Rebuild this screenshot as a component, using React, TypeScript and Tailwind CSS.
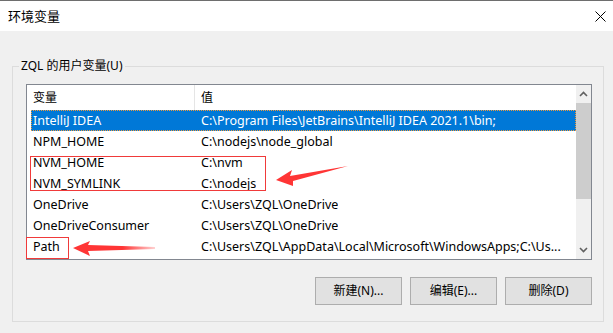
import React from "react";

const rows = [
  { name: "IntelliJ IDEA", value: "C:\\Program Files\\JetBrains\\IntelliJ IDEA 2021.1\\bin;" },
  { name: "NPM_HOME", value: "C:\\nodejs\\node_global" },
  { name: "NVM_HOME", value: "C:\\nvm" },
  { name: "NVM_SYMLINK", value: "C:\\nodejs" },
  { name: "OneDrive", value: "C:\\Users\\ZQL\\OneDrive" },
  { name: "OneDriveConsumer", value: "C:\\Users\\ZQL\\OneDrive" },
  { name: "Path", value: "C:\\Users\\ZQL\\AppData\\Local\\Microsoft\\WindowsApps;C:\\Us..." },
];

const font = { fontFamily: '"Noto Sans", "Noto Sans CJK SC", sans-serif' };

export default function App() {
  return (
    <div
      className="relative h-[333px] w-[613px] overflow-hidden bg-[#f0f0f0] text-[12px] text-black"
      style={font}
    >
      {/* Title bar */}
      <div className="flex h-[31px] items-center justify-between border-t border-[#6e6e6e] bg-white pl-[8px] pr-[7px]">
        <span className="text-[13px] leading-none">环境变量</span>
        <svg width="11" height="11" viewBox="0 0 11 11">
          <path d="M0.5 0.5 L10.5 10.5 M10.5 0.5 L0.5 10.5" stroke="#000" strokeWidth="1" />
        </svg>
      </div>

      {/* Group box */}
      <div className="relative ml-[12px] mt-[35px] h-[256px] w-[592px] border border-[#dcdcdc] pl-[13px] pt-[17px]">
        <span className="absolute left-[6px] top-[-9px] bg-[#f0f0f0] px-[2px] leading-[16px]">
          ZQL 的用户变量(U)
        </span>

        {/* List view */}
        <div className="flex h-[176px] w-[566px] border border-[#828790] bg-white text-[12.5px]">
          <div className="flex min-w-0 flex-1 flex-col">
            <div className="flex h-[25px] shrink-0 items-center text-[12px]">
              <div className="h-full w-[168px] border-r border-[#e5e5e5] pl-[6px] pt-[4px]">变量</div>
              <div className="pl-[6px]">值</div>
            </div>
            {rows.map((r, i) => (
              <div
                key={r.name}
                className={
                  i === 0
                    ? "ml-[4px] flex h-[21px] shrink-0 items-center border border-dotted border-[#f09a3c] bg-[#0078d7] pt-[1px] text-white"
                    : "ml-[4px] flex h-[21px] shrink-0 items-center border border-transparent pt-[1px]"
                }
              >
                <div className="w-[168px] shrink-0 pl-[1px]">{r.name}</div>
                <div className="min-w-0 overflow-hidden whitespace-nowrap pl-[1px]">{r.value}</div>
              </div>
            ))}
          </div>

          {/* Scrollbar */}
          <div className="flex w-[15px] shrink-0 flex-col bg-[#f0f0f0]">
            <div className="flex h-[18px] items-center justify-center">
              <svg width="9" height="6" viewBox="0 0 9 6">
                <path d="M1 5 L4.5 1.5 L8 5" fill="none" stroke="#606060" strokeWidth="1.6" />
              </svg>
            </div>
            <div className="h-[96px] bg-[#cdcdcd]" />
            <div className="flex-1" />
            <div className="flex h-[18px] items-center justify-center">
              <svg width="9" height="6" viewBox="0 0 9 6">
                <path d="M1 1 L4.5 4.5 L8 1" fill="none" stroke="#606060" strokeWidth="1.6" />
              </svg>
            </div>
          </div>
        </div>

        {/* Buttons */}
        <div className="mt-[17px] flex justify-end gap-[8px] pr-[11px]">
          {["新建(N)...", "编辑(E)...", "删除(D)"].map((b) => (
            <button
              key={b}
              className="h-[28px] w-[87px] border border-[#adadad] bg-[#e1e1e1] text-[12px]"
            >
              {b}
            </button>
          ))}
        </div>
      </div>

      {/* Annotations */}
      <div className="absolute left-[30px] top-[156px] h-[35px] w-[236px] border border-[#f03a3a]" />
      <div className="absolute left-[26px] top-[237px] h-[22px] w-[43px] border border-[#f03a3a]" />
      <svg className="absolute left-0 top-0" width="613" height="333">
        <defs>
          <linearGradient id="fade" x1="73" y1="0" x2="156" y2="0" gradientUnits="userSpaceOnUse">
            <stop offset="0.6" stopColor="#ff3535" />
            <stop offset="1" stopColor="#ff3535" stopOpacity="0.2" />
          </linearGradient>
        </defs>
        <polygon points="276,180 292,170 290,176 348,166 293,181 293,186" fill="#ff3535" />
        <polygon points="73,248 90,241 88,245 155,247 155,249 88,251 90,256" fill="url(#fade)" />
      </svg>
    </div>
  );
}
